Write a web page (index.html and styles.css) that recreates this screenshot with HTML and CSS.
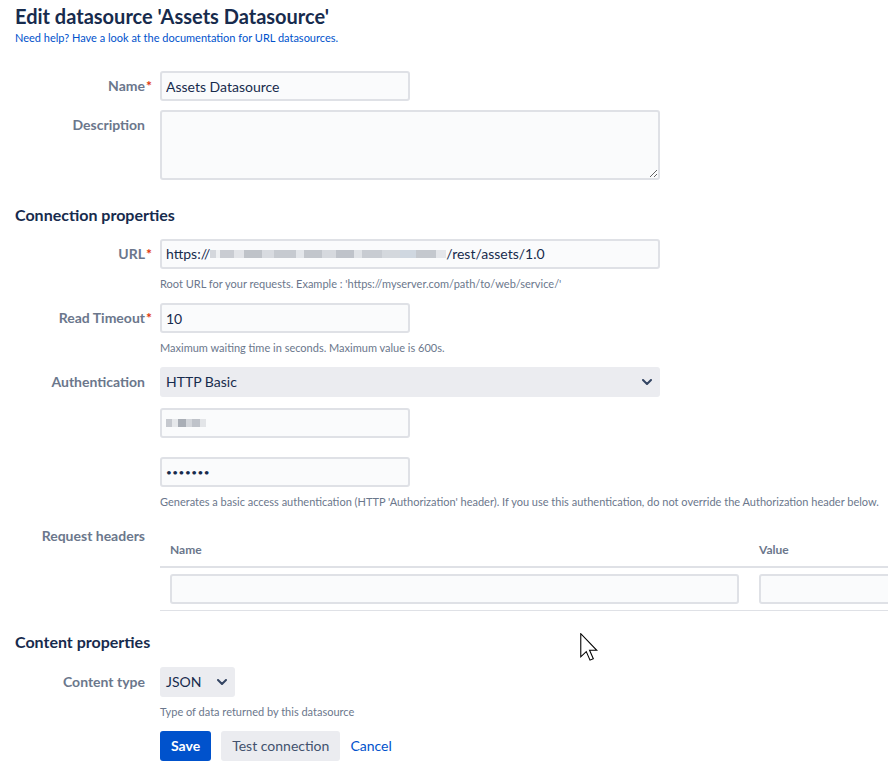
FILE: index.html
```html
<!DOCTYPE html>
<html lang="en">
<head>
<meta charset="utf-8">
<title>Edit datasource</title>
<link rel="stylesheet" href="styles.css">
</head>
<body>
<main class="page">
  <h1 class="title">Edit datasource 'Assets Datasource'</h1>
  <p class="intro"><a href="#">Need help? Have a look at the documentation for URL datasources.</a></p>

  <form class="form">
    <div class="group tight">
      <label class="lbl">Name<span class="req">*</span></label>
      <div class="ctl"><input class="field short" type="text" value="Assets Datasource"></div>
    </div>
    <div class="group">
      <label class="lbl">Description</label>
      <div class="ctl"><textarea class="field area"></textarea></div>
    </div>

    <h2 class="section section-first">Connection properties</h2>

    <div class="group">
      <label class="lbl">URL<span class="req">*</span></label>
      <div class="ctl">
        <div class="field long faux">https://<span class="masked url-mask"></span>/rest/assets/1.0</div>
        <div class="help">Root URL for your requests. Example : 'https://myserver.com/path/to/web/service/'</div>
      </div>
    </div>
    <div class="group">
      <label class="lbl">Read Timeout<span class="req">*</span></label>
      <div class="ctl">
        <input class="field short" type="text" value="10">
        <div class="help">Maximum waiting time in seconds. Maximum value is 600s.</div>
      </div>
    </div>
    <div class="group">
      <label class="lbl">Authentication</label>
      <div class="ctl">
        <div class="select long">
          <span>HTTP Basic</span>
          <svg class="chev" width="10" height="6" viewBox="0 0 10 6"><path d="M1 1l4 4 4-4" fill="none" stroke="#344563" stroke-width="2" stroke-linecap="round" stroke-linejoin="round"/></svg>
        </div>
      </div>
    </div>
    <div class="group loose">
      <div class="lbl"></div>
      <div class="ctl"><div class="field short faux"><span class="masked user-mask"></span></div></div>
    </div>
    <div class="group">
      <div class="lbl"></div>
      <div class="ctl">
        <input class="field short pw" type="password" value="1234567">
        <div class="help">Generates a basic access authentication (HTTP 'Authorization' header). If you use this authentication, do not override the Authorization header below.</div>
      </div>
    </div>
    <div class="group">
      <label class="lbl">Request headers</label>
      <div class="ctl table-wrap">
        <table class="headers">
          <colgroup><col class="c-name"><col class="c-value"></colgroup>
          <thead><tr><th>Name</th><th>Value</th></tr></thead>
          <tbody><tr><td><input class="field wide" type="text"></td><td><input class="field wide" type="text"></td></tr></tbody>
        </table>
      </div>
    </div>

    <h2 class="section section-second">Content properties</h2>

    <div class="group">
      <label class="lbl">Content type</label>
      <div class="ctl">
        <div class="select mini">
          <span>JSON</span>
          <svg class="chev" width="10" height="6" viewBox="0 0 10 6"><path d="M1 1l4 4 4-4" fill="none" stroke="#344563" stroke-width="2" stroke-linecap="round" stroke-linejoin="round"/></svg>
        </div>
        <div class="help">Type of data returned by this datasource</div>
      </div>
    </div>
    <div class="group actions">
      <div class="lbl"></div>
      <div class="ctl buttons">
        <button type="button" class="btn primary">Save</button>
        <button type="button" class="btn">Test connection</button>
        <a href="#" class="cancel">Cancel</a>
      </div>
    </div>
  </form>
</main>

<svg class="pointer" width="18" height="28" viewBox="0 0 12.4 19.4">
  <path d="M0.5 0.5V16.5L4.3 12.9L6.9 18.8L9.2 17.8L6.6 12H11.6Z" fill="#fff" stroke="#000" stroke-width="0.75" stroke-linejoin="miter"/>
</svg>
</body>
</html>
```

FILE: styles.css
```css
* { box-sizing: border-box; }

html, body { margin: 0; }

body {
  position: relative;
  min-height: 768px;
  overflow-x: hidden;
  background: #fff;
  color: #172b4d;
  font-family: Lato, "Noto Sans", sans-serif;
  font-size: 14px;
  line-height: 20px;
}

a { color: #0052cc; text-decoration: none; }

.page { padding: 0 0 0 15px; }

.title {
  margin: 4px 0 0;
  font-size: 20px;
  line-height: 24px;
  font-weight: 700;
  color: #172b4d;
  white-space: nowrap;
}

.intro {
  margin: 2px 0 25px;
  font-size: 11px;
  line-height: 16px;
}

.section {
  margin: 0;
  font-size: 16px;
  line-height: 20px;
  font-weight: 700;
  color: #172b4d;
}
.section-first { margin: 25px 0 14px; }
.section-second { margin: 21px 0 15px; }

/* label column + control column */
.group {
  display: flex;
  margin-bottom: 11px;
}
.group.tight { margin-bottom: 9px; }
.group.loose { margin-bottom: 19px; }
.group.actions { margin-top: 1px; margin-bottom: 0; }

.lbl {
  position: relative;
  flex: 0 0 130px;
  padding-top: 5px;
  text-align: right;
  color: #6b778c;
  font-weight: 700;
  white-space: nowrap;
}
.req {
  position: absolute;
  left: 100%;
  margin-left: 1px;
  color: #de350b;
}

.ctl {
  margin-left: 15px;
  min-width: 0;
}

.field {
  display: block;
  height: 30px;
  margin: 0;
  padding: 0 4px;
  border: 2px solid #dfe1e6;
  border-radius: 3px;
  background: #fafbfc;
  color: #172b4d;
  font: inherit;
  line-height: 26px;
  outline: none;
}
.short { width: 250px; }
.long { width: 500px; }
.wide { width: 100%; }
.area { width: 500px; height: 70px; resize: vertical; padding: 4px; }
.faux { white-space: nowrap; }
.pw { font-size: 10px; letter-spacing: 0.5px; }

/* blurred secrets */
.masked {
  display: inline-block;
  vertical-align: -3px;
  height: 16px;
  filter: blur(0.6px);
}
.url-mask {
  width: 236px;
  background:
    linear-gradient(90deg,
      #d4d7dc 0 6px, #eef0f2 6px 10px, #c9ccd2 10px 24px, #e2e4e8 24px 34px,
      #bfc3c9 34px 52px, #d8dbe0 52px 64px, #c6cad0 64px 86px, #e3e6ea 86px 94px,
      #c2c6cc 94px 112px, #d6d9de 112px 126px, #bfc3ca 126px 144px, #e0e3e7 144px 152px,
      #c8ccd2 152px 172px, #d4d8dd 172px 190px, #cfd7e0 190px 206px, #c4c8ce 206px 226px, #e4e6ea 226px 236px);
  background-size: 100% 8px;
  background-repeat: no-repeat;
  background-position: 0 4px;
}
.user-mask {
  width: 40px;
  background: linear-gradient(90deg,
    #c6c9cf 0 6px, #e6e8eb 6px 12px, #a9aeb6 12px 20px, #d3d6db 20px 26px, #bfc3ca 26px 34px, #e3e5e8 34px 40px);
  background-size: 100% 8px;
  background-repeat: no-repeat;
  background-position: 0 4px;
}

/* select boxes */
.select {
  position: relative;
  height: 30px;
  padding: 0 6px;
  border-radius: 3px;
  background: #ebecf0;
  color: #172b4d;
  line-height: 30px;
}
.select.mini { width: 75px; }
.chev {
  position: absolute;
  right: 8px;
  top: 12px;
}

.help {
  margin-top: 7px;
  font-size: 11px;
  line-height: 16px;
  color: #6b778c;
  white-space: nowrap;
}

/* request headers table, cut off at the window edge */
.table-wrap {
  flex: 0 0 728px;
  overflow: hidden;
}
.headers {
  margin-top: 10px;
  width: 820px;
  border-collapse: collapse;
  table-layout: fixed;
}
.c-name { width: 589px; }
.headers th {
  padding: 10px 10px 7px;
  text-align: left;
  font-size: 12px;
  line-height: 18px;
  font-weight: 700;
  color: #6b778c;
  border-bottom: 2px solid #dfe1e6;
}
.headers td {
  padding: 6px 10px;
  border-bottom: 1px solid #dfe1e6;
}

/* buttons */
.buttons {
  display: flex;
  align-items: center;
  gap: 10px;
}
.btn {
  height: 30px;
  padding: 0 11px;
  border: 0;
  border-radius: 3px;
  background: #ebecf0;
  color: #42526e;
  font: inherit;
  line-height: 30px;
}
.btn.primary {
  background: #0052cc;
  color: #fff;
  font-weight: 700;
}
.cancel { line-height: 30px; }

.pointer {
  position: absolute;
  left: 580px;
  top: 633px;
}
```
